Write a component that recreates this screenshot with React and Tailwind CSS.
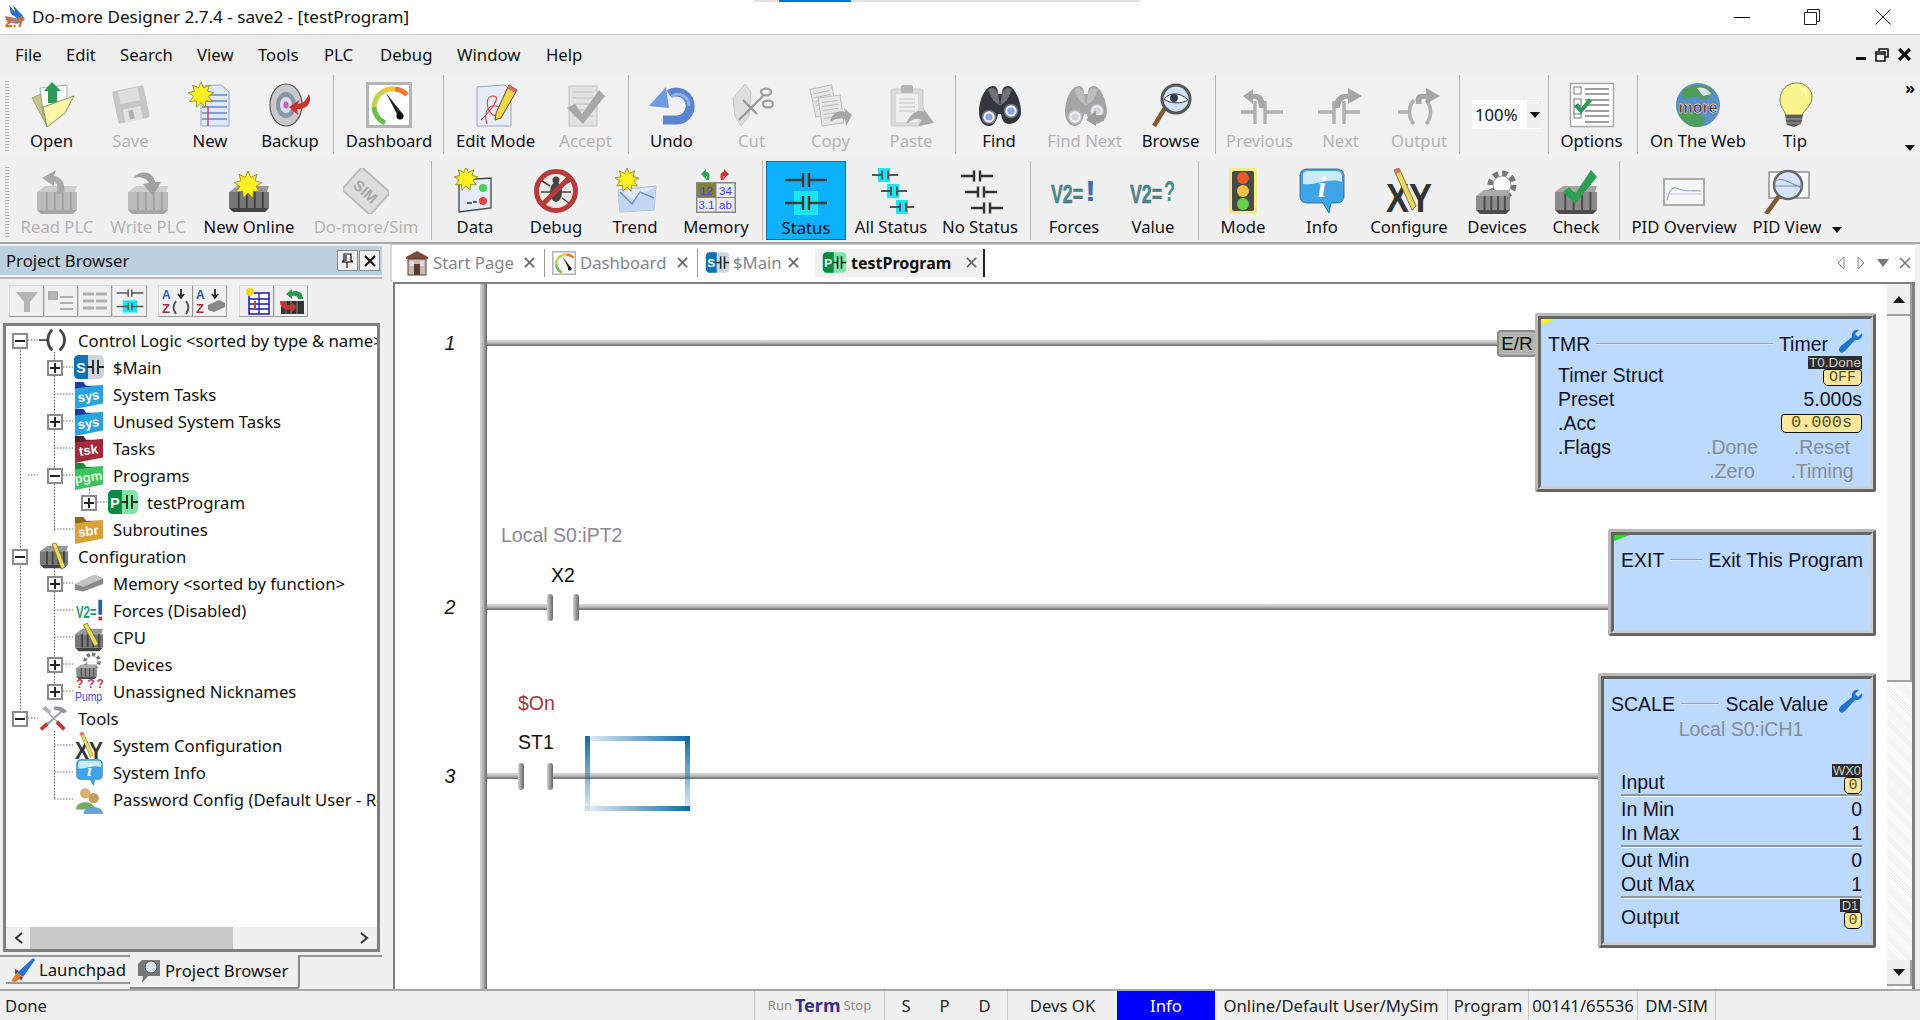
import React from 'react';

const pts = (cx, cy, R, r, n) =>
  Array.from({ length: n * 2 }, (_, i) => {
    const a = (Math.PI * i) / n - Math.PI / 2;
    const q = i % 2 ? r : R;
    return `${(cx + q * Math.cos(a)).toFixed(1)},${(cy + q * Math.sin(a)).toFixed(1)}`;
  }).join(' ');

const Star = ({ x, y, R = 11 }) => <polygon points={pts(x, y, R, R * 0.58, 9)} fill="#fff021" stroke="#8a7d1c" strokeWidth=".8" />;
const I = ({ children, s = 46, v = 46 }) => (
  <svg width={s} height={s} viewBox={`0 0 ${v} ${v}`} className="block shrink-0">{children}</svg>
);
const Ct = ({ x, y, w = 40, c = '#555', sw = 2.5, h = 12 }) => {
  const m = x + w / 2;
  return (
    <g stroke={c} strokeWidth={sw} fill="none">
      <path d={`M${x} ${y}H${m - 3}M${m + 3} ${y}H${x + w}M${m - 3} ${y - h / 2}V${y + h / 2}M${m + 3} ${y - h / 2}V${y + h / 2}`} />
    </g>
  );
};
const Plc = ({ x = 4, y = 20, w = 36, h = 24, a = '#9a9a9a', b = '#6e6e6e', t = '#c2c2c2' }) => (
  <g>
    <polygon points={`${x},${y} ${x + 8},${y - 6} ${x + w},${y - 6} ${x + w - 2},${y}`} fill={t} />
    <rect x={x} y={y} width={w} height={h - 4} fill={a} />
    <polygon points={`${x},${y + h - 4} ${x + w},${y + h - 4} ${x + w - 4},${y + h} ${x + 4},${y + h}`} fill={b} />
    {[0.22, 0.42, 0.62, 0.82].map((f) => <rect key={f} x={x + w * f} y={y} width="2" height={h - 4} fill={b} />)}
  </g>
);

const Open = () => <I>
  <polygon points="3,16 12,12 14,34 18,44" fill="#c9c48a" stroke="#8b8b60" strokeWidth=".7" />
  <polygon points="11,6 38,3 38,24 15,36" fill="#fff" stroke="#999" strokeWidth=".8" />
  <polygon points="23,0 32,9 28,9 28,21 19,21 19,9 15,9" fill="#2f9a55" />
  <polygon points="18,45 14,25 45,14 36,31" fill="#fdf7a9" stroke="#85835a" strokeWidth=".9" />
</I>;
const Save = () => <I><g transform="rotate(-12 23 23)">
  <rect x="7" y="6" width="32" height="33" rx="2" fill="#c6c6c6" />
  <rect x="13" y="7" width="20" height="13" fill="#dedede" />
  <rect x="14" y="26" width="18" height="13" fill="#e2e2e2" />
  <rect x="19" y="28" width="5" height="9" fill="#b0b0b0" />
</g></I>;
const New = () => <I>
  <polygon points="14,4 34,3 42,10 42,44 14,44" fill="#dfe9fa" stroke="#93a6c8" />
  {[13, 19, 25, 31, 37].map((y) => <path key={y} d={`M15 ${y}H40`} stroke="#3f6fb5" strokeWidth="1.2" />)}
  <path d="M21 24V44" stroke="#c04060" strokeWidth="1.4" />
  <Star x={14} y={13} R={13} />
</I>;
const Backup = () => <I>
  <ellipse cx="19" cy="23" rx="16" ry="21" fill="#c9c9c9" stroke="#555" strokeWidth="1.2" />
  <ellipse cx="19" cy="23" rx="10" ry="13" fill="#8596a6" />
  <ellipse cx="19" cy="23" rx="6" ry="8" fill="#dcdcdc" />
  <ellipse cx="19" cy="23" rx="2.5" ry="3.4" fill="#c65fc6" />
  <path d="M42 12C46 22 38 28 30 27L31 33L22 25L32 18L31 22C36 22 39 18 42 12Z" fill="#c5342f" />
</I>;
const Gauge = ({ s = 46 }) => <I s={s}>
  <rect x="1.5" y="1.5" width="43" height="43" fill="#fff" stroke="#b5b5b5" strokeWidth="3" />
  <g fill="none" strokeWidth="5">
    <path d="M19 41A19 19 0 0 1 8 25" stroke="#6cc04f" />
    <path d="M8 25A19 19 0 0 1 18 9" stroke="#c3d24a" />
    <path d="M18 9A19 19 0 0 1 29 7" stroke="#f3c33b" />
    <path d="M29 7A19 19 0 0 1 41 13" stroke="#ee7b33" />
  </g>
  <polygon points="20,11 36,31 32,34" fill="#222" />
  <circle cx="34" cy="34" r="3.6" fill="#111" />
</I>;
const Edit = () => <I>
  <polygon points="4,5 32,3 38,9 38,44 4,44" fill="#e6edf9" stroke="#9aa5b5" />
  <path d="M8 38C16 30 30 14 20 14C10 14 14 34 24 34C30 34 30 24 22 24C16 24 10 28 14 42" fill="none" stroke="#d24242" strokeWidth="1.1" />
  <polygon points="36,3 44,8 28,36 22,38 23,31" fill="#f2d64b" stroke="#5e5320" />
  <polygon points="36,3 44,8 42,11 34,6" fill="#d96a6a" />
</I>;
const Accept = () => <I>
  <rect x="6" y="4" width="28" height="40" fill="#e2e2e2" stroke="#c6c6c6" />
  {[10, 16, 22, 28, 34].map((y) => <path key={y} d={`M10 ${y}H30`} stroke="#c0c0c0" />)}
  <polygon points="4,26 12,22 19,32 36,8 42,14 20,42" fill="#a8a8a8" />
</I>;
const Undo = () => <I>
  <path d="M20 12A14 14 0 1 1 26 38H14" fill="none" stroke="#5b86cf" strokeWidth="9" />
  <path d="M22 15A11 11 0 0 1 40 24" fill="none" stroke="#8eb2ea" strokeWidth="3" />
  <polygon points="0,24 17,5 20,26" fill="#6e9bdf" />
</I>;
const Cut = () => <I>
  <polygon points="4,16 16,2 22,10 20,34 12,44 6,34" fill="#dedede" stroke="#c8c8c8" />
  <path d="M10 38L34 14M14 18L28 32" stroke="#9a9a9a" strokeWidth="2.4" />
  <ellipse cx="37" cy="10" rx="5" ry="3.4" fill="none" stroke="#a0a0a0" strokeWidth="2.4" />
  <ellipse cx="39" cy="22" rx="5" ry="3.4" fill="none" stroke="#a0a0a0" strokeWidth="2.4" />
</I>;
const Copy = () => <I>
  <g transform="rotate(-12 20 20)"><rect x="5" y="4" width="22" height="28" fill="#e6e6e6" stroke="#bdbdbd" />{[9, 13, 17, 21, 25].map((y) => <path key={y} d={`M8 ${y}H24`} stroke="#bbb" />)}</g>
  <g transform="rotate(-8 26 28)"><rect x="12" y="14" width="22" height="28" fill="#e6e6e6" stroke="#bdbdbd" />{[19, 23, 27, 31, 35].map((y) => <path key={y} d={`M15 ${y}H31`} stroke="#bbb" />)}</g>
  <path d="M22 40C24 30 32 28 37 30L36 26L44 33L38 44L37 37C32 35 27 37 22 40Z" fill="#a5a5a5" />
</I>;
const Paste = () => <I>
  <rect x="3" y="7" width="32" height="37" rx="2" fill="#dadada" stroke="#cbcbcb" />
  <rect x="8" y="12" width="22" height="28" fill="#efefef" />
  {[17, 21, 25, 29].map((y) => <path key={y} d={`M11 ${y}H27`} stroke="#c2c2c2" />)}
  <rect x="13" y="3" width="12" height="8" rx="2" fill="#b5b5b5" />
  <path d="M18 42C22 32 30 26 36 30L35 26L46 41L30 44L34 38C28 35 24 38 18 42Z" fill="#a9a9a9" />
</I>;
const Binoc = ({ gray }) => {
  const d = gray ? '#a5a5a5' : '#33363c';
  const m = gray ? '#bdbdbd' : '#6f7278';
  const l = gray ? '#d4d4d4' : '#88a6e4';
  return <I>
    <path d="M3 30C3 18 9 4 17 4C22 4 22 10 22 12H26C26 10 26 4 32 4C38 4 45 18 45 30C45 38 38 42 33 42C28 42 26 38 25 32H22C21 38 18 44 13 44C7 44 3 38 3 30Z" fill={d} />
    <path d="M12 8C16 4 20 6 22 12L24 24L17 18Z" fill={m} />
    <path d="M36 8C32 4 28 6 26 12L24 24L31 18Z" fill={m} />
    <circle cx="13" cy="35" r="6.5" fill="#e9eefc" stroke={m} strokeWidth="1.5" /><circle cx="13" cy="35" r="3.6" fill={l} />
    <circle cx="35" cy="29" r="6.5" fill="#e9eefc" stroke={m} strokeWidth="1.5" /><circle cx="35" cy="29" r="3.6" fill={l} />
    {gray && <polygon points="24,38 34,28 34,33 42,33 42,39 34,39 34,44" fill="#9d9d9d" />}
  </I>;
};
const Browse = () => <I>
  <path d="M6 44L17 26" stroke="#7f5a30" strokeWidth="4.5" />
  <circle cx="28" cy="17" r="14" fill="#cfdff8" stroke="#555" strokeWidth="3" />
  <path d="M16 17C22 10 32 10 40 18C34 22 22 22 16 17Z" fill="#fff" stroke="#333" strokeWidth="1" />
  <circle cx="26" cy="16" r="4" fill="#2c3e50" />
</I>;
const GArrowL = () => <I>
  <path d="M4 30H18M18 19V42M28 19V42M28 30H46" stroke="#b0b0b0" strokeWidth="3.4" fill="none" />
  <path d="M28 26C28 14 22 11 16 12L16 7L6 14L16 22L16 17C20 16 22 20 22 26Z" fill="#a6a6a6" />
</I>;
const GArrowR = () => <I>
  <path d="M0 30H16M16 19V42M26 19V42M26 30H42" stroke="#b0b0b0" strokeWidth="3.4" fill="none" />
  <path d="M16 26C16 14 24 11 30 12L30 6L44 14L30 22L30 17C26 16 22 20 22 26Z" fill="#a6a6a6" />
</I>;
const GOut = () => <I>
  <path d="M2 30H12" stroke="#b0b0b0" strokeWidth="3.4" />
  <path d="M18 18C12 24 12 36 18 42M30 18C36 24 36 36 30 42" fill="none" stroke="#b0b0b0" strokeWidth="3.6" />
  <path d="M20 22C18 12 24 11 30 12L30 6L44 14L30 22L30 17C26 16 24 18 26 22Z" fill="#a6a6a6" />
</I>;
const Options = () => <I>
  <rect x="1.5" y="1.5" width="43" height="43" fill="#fff" stroke="#aaa" strokeWidth="1.5" />
  {[8, 20, 32].map((y) => <rect key={y} x="5" y={y - 3} width="7" height="7" fill="#fff" stroke="#777" />)}
  <rect x="5" y="25" width="7" height="7" fill="#fff" stroke="#777" />
  {[7, 12, 18, 23, 29, 34, 40].map((y) => <path key={y} d={`M16 ${y}H40`} stroke="#888" strokeWidth="1.6" />)}
  <polygon points="5,24 9,21 12,26 20,16 23,19 12,32" fill="#2f9a55" />
</I>;
const Web = () => <I>
  <circle cx="23" cy="23" r="22" fill="#5a8fc9" />
  <path d="M8 8C16 2 30 0 38 8C38 14 30 20 24 16C18 12 12 18 6 16ZM4 32C12 28 24 30 30 36C30 42 24 46 20 45C12 44 6 38 4 32Z" fill="#4f9c58" />
  <path d="M22 6C28 4 34 8 36 12L28 14Z" fill="#d9e4ee" />
  <text x="23" y="31" textAnchor="middle" fontFamily="Liberation Sans" fontWeight="700" fontSize="16" fill="#5d2f1d" stroke="#fff" strokeWidth=".4">more</text>
</I>;
const Tip = () => <I>
  <path d="M25 1C14 1 8 9 8 18C8 25 12 28 14 33H30C32 28 40 24 40 15C40 7 33 1 25 1Z" fill="#f9f48c" stroke="#80804c" />
  <path d="M26 5C32 5 36 10 35 16C33 10 30 7 26 5Z" fill="#fffde0" />
  <path d="M13 33H31L29 42L22 45L15 43Z" fill="#5c5c5c" />
  <path d="M13 37H30M14 41H29" stroke="#9d9d9d" strokeWidth="1.2" />
</I>;
const ReadPlc = () => <I>
  <Plc x={3} y={24} w={40} h={22} a="#bbb" b="#a4a4a4" t="#cdcdcd" />
  <path d="M30 26C32 14 26 8 20 8L22 2L8 10L20 18L20 14C24 14 24 22 22 26Z" fill="#a9a9a9" />
</I>;
const WritePlc = () => <I>
  <Plc x={3} y={24} w={40} h={22} a="#bbb" b="#a4a4a4" t="#cdcdcd" />
  <path d="M8 10C14 2 28 2 30 14L36 14L28 28L18 16L24 15C22 10 14 8 8 10Z" fill="#a2a2a2" />
</I>;
const NewOnline = () => <I>
  <Plc x={3} y={24} w={40} h={20} a="#777" b="#444" t="#999" />
  <Star x={22} y={17} R={14} />
</I>;
const Sim = () => <I>
  <g transform="rotate(42 23 23)">
    <rect x="4" y="8" width="38" height="30" rx="2" fill="#ddd" stroke="#bbb" strokeWidth="2" />
    <text x="23" y="29" textAnchor="middle" fontFamily="Liberation Sans" fontWeight="700" fontSize="15" fill="#a8a8a8">SIM</text>
  </g>
</I>;
const Data = () => <I>
  <polygon points="7,12 39,10 39,40 7,44" fill="#e4ecf8" stroke="#444" strokeWidth="1.3" />
  <circle cx="31" cy="20" r="4" fill="#46d060" /><circle cx="31" cy="33" r="4" fill="#e04848" />
  <path d="M15 35H20M21 34H25" stroke="#333" strokeWidth="1.6" />
  <Star x={14} y={11} R={12} />
</I>;
const Debug = () => <I>
  <circle cx="23" cy="23" r="19.5" fill="#ede9e6" stroke="#b83b3b" strokeWidth="5" />
  <ellipse cx="23" cy="24" rx="6" ry="10" fill="#444" />
  <circle cx="23" cy="12" r="3.5" fill="#444" />
  <path d="M17 18L9 13M17 24H8M17 30L10 35M29 18L37 13M29 24H38M29 30L36 35" stroke="#444" strokeWidth="1.5" />
  <path d="M9 37L37 9" stroke="#b83b3b" strokeWidth="5" />
</I>;
const Trend = () => <I>
  <polygon points="6,22 44,18 42,42 8,44" fill="#dde8fa" stroke="#a8b6cc" />
  <polygon points="6,22 22,32 44,18 42,42 8,44" fill="#c2d5f3" />
  <path d="M8 24L20 36L28 24L42 30" fill="none" stroke="#6f8fb8" strokeWidth="1.4" />
  <Star x={15} y={12} R={12} />
</I>;
const Memory = () => <I>
  <path d="M8 6L13 1V4C17 4 17 8 16 12L13 12C14 9 14 8 13 8V11Z" fill="#2ea24f" />
  <path d="M36 6L31 1V4C27 4 27 8 28 12L31 12C30 9 30 8 31 8V11Z" fill="#d0342f" />
  <rect x="3" y="14" width="40" height="31" fill="#888" />
  <rect x="4.5" y="15.5" width="18" height="13.5" fill="#7f7f3a" /><rect x="23.5" y="15.5" width="18" height="13.5" fill="#ececec" />
  <rect x="4.5" y="30" width="18" height="13.5" fill="#ececec" /><rect x="23.5" y="30" width="18" height="13.5" fill="#ececec" />
  <g fontFamily="Liberation Sans" fontSize="11.5" fill="#3d3dff" textAnchor="middle">
    <text x="13.5" y="26.5">12</text><text x="32.5" y="26.5">34</text><text x="13.5" y="41">3.1</text><text x="32.5" y="41">ab</text>
  </g>
</I>;
const Status = () => <I>
  <Ct x={2} y={11} w={42} c="#3d3d3d" h={14} />
  <rect x="11" y="22" width="24" height="24" fill="#19e6f0" />
  <Ct x={2} y={34} w={42} c="#3d3d3d" h={14} />
</I>;
const AllStatus = () => <I>
  {[[4, 3], [13, 19], [22, 35]].map(([x, y]) => <g key={y}>
    <rect x={x + 6} y={y - 3} width="12" height="14" fill="#1fe5ee" />
    <Ct x={x} y={y + 4} w={26} c="#555" sw={2} h={9} />
  </g>)}
</I>;
const NoStatus = () => <I>
  <Ct x={4} y={8} w={32} c="#333" h={11} />
  <Ct x={8} y={24} w={32} c="#333" h={11} />
  <Ct x={14} y={40} w={32} c="#333" h={11} />
</I>;
const Vtext = ({ q }) => <I>
  <text x="0" y="35" fontFamily="Liberation Sans" fontWeight="700" fontSize="25" textLength="32" lengthAdjust="spacingAndGlyphs" fill="#3f8f8a" stroke="#557" strokeWidth=".4">V2=</text>
  <text x="34" y="33" fontFamily="Liberation Sans" fontWeight="700" fontSize="30" textLength="11" lengthAdjust="spacingAndGlyphs" fill={q ? '#3f8f8a' : '#3d6fb0'}>{q ? '?' : '!'}</text>
</I>;
const Mode = () => <I>
  <rect x="9" y="0" width="28" height="46" rx="2" fill="#f2ed88" />
  <rect x="12" y="3" width="22" height="40" rx="2" fill="#4a4a44" />
  <circle cx="23" cy="10" r="6" fill="#e85a2a" /><circle cx="23" cy="23" r="6" fill="#edc341" /><circle cx="23" cy="36" r="6" fill="#63cf4c" />
</I>;
const Info = ({ s = 46 }) => <I s={s}>
  <path d="M8 1H38C42 1 45 4 45 8V28C45 32 42 35 38 35H32L30 45L24 35H8C4 35 1 32 1 28V8C1 4 4 1 8 1Z" fill="#3ea5e8" stroke="#1a5a90" strokeWidth=".8" />
  <path d="M4 8C4 4 6 3 9 3H37C41 3 43 5 43 9V14C30 9 16 18 4 16Z" fill="#cdeafb" />
  <text x="23" y="29" textAnchor="middle" fontFamily="Liberation Serif" fontStyle="italic" fontWeight="700" fontSize="30" fill="#fff">i</text>
</I>;
const Xy = ({ s = 46 }) => <I s={s}>
  <text x="0" y="44" fontFamily="Liberation Sans" fontWeight="700" fontSize="40" fill="#333" textLength="46" lengthAdjust="spacingAndGlyphs">XY</text>
  <polygon points="8,2 13,0 30,38 26,42" fill="#edd860" stroke="#6a5f20" strokeWidth=".8" />
  <polygon points="8,2 13,0 15,4 10,6" fill="#d97272" />
</I>;
const Devices = ({ s = 46 }) => <I s={s}>
  <circle cx="28" cy="17" r="11" fill="#fff" stroke="#777" strokeWidth="7" strokeDasharray="5 3.6" />
  <circle cx="28" cy="17" r="9" fill="#fff" stroke="#999" />
  <Plc x={2} y={28} w={34} h={18} a="#8c8c8c" b="#4c4c4c" t="#aaa" />
</I>;
const Check = () => <I>
  <Plc x={2} y={24} w={42} h={22} a="#8a8a8a" b="#4c4c4c" t="#a5a5a5" />
  <polygon points="10,24 16,19 22,26 38,2 44,9 22,36" fill="#2d9e52" />
</I>;
const PidO = () => <I>
  <rect x="3" y="11" width="40" height="26" fill="#f7f7f7" stroke="#999" strokeWidth="1.6" />
  <path d="M6 32C9 20 13 18 18 21C24 24 32 22 40 23" fill="none" stroke="#8faac8" strokeWidth="1.2" />
  <path d="M5 26H41" stroke="#b4c8de" />
</I>;
const PidV = () => <I>
  <rect x="5" y="4" width="40" height="26" fill="#f7f7f7" stroke="#999" strokeWidth="1.6" />
  <path d="M2 46L15 28" stroke="#7f5a30" strokeWidth="4.5" />
  <circle cx="24" cy="17" r="14" fill="#d6e4f9" stroke="#666" strokeWidth="2.4" />
  <path d="M10 14C16 8 24 14 38 20M10 18H38" fill="none" stroke="#6e8bb4" strokeWidth="1.1" />
</I>;

const row1 = [
  ['Open', Open, 'w-[79px]', 0], ['Save', Save, 'w-[79px]', 1], ['New', New, 'w-[80px]', 0], ['Backup', Backup, 'w-[80px]', 0], 's-[6px]',
  ['Dashboard', Gauge, 'w-[106px]', 0], 's-[3px]', ['Edit Mode', Edit, 'w-[101px]', 0], ['Accept', Accept, 'w-[79px]', 1], 's-[6px]',
  ['Undo', Undo, 'w-[81px]', 0], ['Cut', Cut, 'w-[79px]', 1], ['Copy', Copy, 'w-[79px]', 1], ['Paste', Paste, 'w-[82px]', 1], 's-[6px]',
  ['Find', () => <Binoc />, 'w-[82px]', 0], ['Find Next', () => <Binoc gray />, 'w-[89px]', 1], ['Browse', Browse, 'w-[83px]', 0], 's-[6px]',
  ['Previous', GArrowL, 'w-[83px]', 1], ['Next', GArrowR, 'w-[79px]', 1], ['Output', GOut, 'w-[78px]', 1],
];
const row2 = [
  ['Read PLC', ReadPlc, 'w-[90px]', 1], ['Write PLC', WritePlc, 'w-[92px]', 1], ['New Online', NewOnline, 'w-[110px]', 0], ['Do-more/Sim', Sim, 'w-[124px]', 1], 's-[6px]',
  ['Data', Data, 'w-[82px]', 0], ['Debug', Debug, 'w-[80px]', 0], ['Trend', Trend, 'w-[78px]', 0], ['Memory', Memory, 'w-[84px]', 0], 's-[8px]',
  ['Status', Status, 'w-[80px]', 2], ['All Status', AllStatus, 'w-[90px]', 0], ['No Status', NoStatus, 'w-[88px]', 0], 's-[12px]',
  ['Forces', () => <Vtext />, 'w-[76px]', 0], ['Value', () => <Vtext q />, 'w-[82px]', 0], 's-[8px]',
  ['Mode', Mode, 'w-[82px]', 0], ['Info', Info, 'w-[76px]', 0], ['Configure', Xy, 'w-[98px]', 0], ['Devices', Devices, 'w-[78px]', 0], ['Check', Check, 'w-[80px]', 0], 's-[6px]',
  ['PID Overview', PidO, 'w-[124px]', 0], ['PID View', PidV, 'w-[82px]', 0],
];

const Sep = ({ w }) => {
  const cls = { 's-[3px]': 'w-[3px]', 's-[6px]': 'w-[6px]', 's-[8px]': 'w-[8px]', 's-[12px]': 'w-[12px]' }[w];
  return <div className={`${cls} flex justify-center shrink-0 h-[79px]`}><div className="w-[1px] h-full bg-[#b4b4b4]" /></div>;
};
const ToolBtn = ({ item }) => {
  const [label, Ic, w, mode] = item;
  return (
    <div className={`${w} shrink-0 h-[79px] flex flex-col items-center pt-[7px] ${mode === 2 ? 'bg-[#0cb2ff] border border-[#0a6ea8] pt-[6px]' : ''}`}>
      <Ic />
      <span className={`mt-[4px] leading-[18px] text-[16.7px] whitespace-nowrap ${mode === 1 ? 'text-[#b4b4b4]' : 'text-[#101018]'}`}>{label}</span>
    </div>
  );
};
const Gripper = () => <div className="w-[4px] h-[70px] mt-[6px] ml-[5px] mr-[3px] shrink-0 bg-[repeating-linear-gradient(0deg,#b5b5b5_0_1px,transparent_1px_3px)]" />;
const Tri = ({ className = '' }) => <svg width="10" height="6" viewBox="0 0 10 6" className={className}><polygon points="0,0 10,0 5,6" fill="#111" /></svg>;
const X = ({ s = 12, c = '#555', w = 1.6 }) => <svg width={s} height={s} viewBox="0 0 12 12"><path d="M1 1L11 11M11 1L1 11" stroke={c} strokeWidth={w} /></svg>;

const Folder = ({ a, b, t, tc = '#fff' }) => <I s={30} v={32}>
  <path d="M1 2H10L13 6H29V12H1Z" fill={a} />
  <polygon points="1,9 31,5 31,25 1,31" fill={b} />
  <text x="16" y="22" textAnchor="middle" fontFamily="Liberation Sans" fontWeight="700" fontSize="14" fill={tc} transform="rotate(-8 16 22)">{t}</text>
</I>;
const Prog = ({ l, a, b }) => <I s={32} v={32}>
  <rect x="1" y="3" width="30" height="24" rx="5" fill={b} />
  <path d="M1 8C1 5 3 3 6 3H15V27H6C3 27 1 25 1 22Z" fill={a} />
  <text x="8" y="21" textAnchor="middle" fontFamily="Liberation Sans" fontWeight="700" fontSize="14" fill="#fff">{l}</text>
  <path d="M14 15H20M25 15H31M20 8V22M25 8V22" stroke="#222" strokeWidth="1.8" fill="none" />
</I>;
const Ctrl = () => <I s={30} v={32}>
  <path d="M0 15H9" stroke="#555" strokeWidth="2" />
  <path d="M14 4C8 10 8 20 14 26M22 4C29 10 29 20 22 26" fill="none" stroke="#444" strokeWidth="3" />
</I>;
const Cfg = () => <I s={30} v={32}>
  <Plc x={1} y={10} w={30} h={18} a="#777" b="#444" t="#999" />
  <polygon points="14,2 18,1 28,26 24,29" fill="#edd860" stroke="#6a5f20" strokeWidth=".7" />
</I>;
const Mem = () => <I s={30} v={32}>
  <polygon points="1,16 22,6 31,10 31,16 10,24 1,22" fill="#8a8a8a" />
  <polygon points="1,16 22,6 31,10 10,19" fill="#c5c5c5" />
</I>;
const ForcesT = () => <I s={30} v={32}>
  <text x="2" y="23" fontFamily="Liberation Sans" fontWeight="700" fontSize="17" textLength="22" lengthAdjust="spacingAndGlyphs" fill="#1f9a6e">V2=</text>
  <rect x="26" y="4" width="4" height="16" fill="#2a5ea8" /><rect x="26" y="22" width="4" height="4" fill="#d0342f" />
</I>;
const Cpu = () => <I s={30} v={32}>
  <Plc x={1} y={12} w={30} h={18} a="#777" b="#444" t="#9a9a9a" />
  <polygon points="10,2 14,0 26,22 22,25" fill="#edd860" stroke="#6a5f20" strokeWidth=".7" />
</I>;
const Pump = () => <I s={30} v={32}>
  <text x="2" y="12" fontFamily="Liberation Sans" fontWeight="700" fontSize="13" fill="#d0342f">?</text>
  <text x="14" y="12" fontFamily="Liberation Sans" fontWeight="700" fontSize="13" fill="#b03a8a">?</text>
  <text x="24" y="12" fontFamily="Liberation Sans" fontWeight="700" fontSize="13" fill="#c04050">?</text>
  <text x="1" y="26" fontFamily="Liberation Sans" fontSize="13" fill="#3a4fd0" textLength="29" lengthAdjust="spacingAndGlyphs">Pump</text>
</I>;
const ToolsI = () => <I s={30} v={32}>
  <path d="M5 25L24 8" stroke="#9aa4ae" strokeWidth="2.4" />
  <path d="M16 3C20 2 26 3 30 8L26 10C24 8 20 6 16 6Z" fill="#8a94a0" />
  <path d="M3 5L7 2L13 8L11 11Z" fill="#aab0b8" />
  <path d="M11 11L27 26" stroke="#aab0b8" strokeWidth="1.6" />
  <path d="M19 19L27 27" stroke="#d0342f" strokeWidth="4" />
  <path d="M2 27L9 21" stroke="#d0342f" strokeWidth="4" />
</I>;
const Users = () => <I s={30} v={32}>
  <circle cx="12" cy="9" r="5.5" fill="#d8b070" /><path d="M2 26C2 16 22 16 22 26Z" fill="#6fae5f" />
  <circle cx="21" cy="14" r="5.5" fill="#c89a60" /><path d="M10 31C10 21 31 21 31 31Z" fill="#6f9fd0" />
</I>;

const tree = [
  [0, '-', <Ctrl />, 'Control Logic <sorted by type & name>'],
  [1, '+', <Prog l="S" a="#0f72b8" b="#cdd6de" />, '$Main'],
  [1, '', <Folder a="#1a3c9a" b="#29a3e0" t="sys" />, 'System Tasks'],
  [1, '+', <Folder a="#1a3c9a" b="#29a3e0" t="sys" />, 'Unused System Tasks'],
  [1, '', <Folder a="#5a1a2a" b="#a32a3a" t="tsk" />, 'Tasks'],
  [1, '-', <Folder a="#1e8a3a" b="#3fc35f" t="pgm" tc="#d8ffd8" />, 'Programs'],
  [2, '+', <Prog l="P" a="#0c8a45" b="#7fe6a5" />, 'testProgram'],
  [1, '', <Folder a="#8a6a1a" b="#d8a238" t="sbr" />, 'Subroutines'],
  [0, '-', <Cfg />, 'Configuration'],
  [1, '+', <Mem />, 'Memory <sorted by function>'],
  [1, '', <ForcesT />, 'Forces (Disabled)'],
  [1, '', <Cpu />, 'CPU'],
  [1, '+', <Devices s={28} />, 'Devices'],
  [1, '+', <Pump />, 'Unassigned Nicknames'],
  [0, '-', <ToolsI />, 'Tools'],
  [1, '', <Xy s={28} />, 'System Configuration'],
  [1, '', <Info s={27} />, 'System Info'],
  [1, '', <Users />, 'Password Config (Default User - Read/Write)'],
];
const indent = ['pl-[6px]', 'pl-[41px]', 'pl-[75px]'];
const Exp = ({ k }) => k ? (
  <div className="w-[16px] h-[16px] border-2 border-[#8a8a8a] bg-white flex items-center justify-center shrink-0 relative">
    <div className="w-[10px] h-[2px] bg-[#222]" />
    {k === '+' && <div className="absolute w-[2px] h-[10px] bg-[#222]" />}
  </div>
) : <div className="w-[16px] shrink-0" />;

const tbBtns = [
  [<svg width="24" height="24" viewBox="0 0 24 24"><polygon points="1,3 23,3 15,13 15,23 9,23 9,13" fill="#b5b5b5" /></svg>, 'w-[35px]'],
  [<svg width="26" height="24" viewBox="0 0 26 24"><path d="M1 3H9V10H1ZM12 8H25M12 14H25M12 20H25" stroke="#b0b0b0" strokeWidth="2" fill="#b5b5b5" /></svg>, 'w-[34px]'],
  [<svg width="26" height="24" viewBox="0 0 26 24"><path d="M1 5H12M14 5H25M1 12H12M14 12H25M1 19H12M14 19H25" stroke="#b0b0b0" strokeWidth="3" /></svg>, 'w-[34px]'],
  [<svg width="28" height="28" viewBox="0 0 46 46"><rect x="11" y="22" width="24" height="20" fill="#19e6f0" /><Ct x={1} y={10} w={44} c="#555" /><Ct x={1} y={32} w={44} c="#555" /></svg>, 'w-[35px] mr-[11px]'],
  [<svg width="30" height="28" viewBox="0 0 30 28"><text x="1" y="12" fontFamily="Liberation Sans" fontWeight="700" fontSize="12" fill="#2a5ea8">A</text><text x="1" y="26" fontFamily="Liberation Sans" fontWeight="700" fontSize="13" fill="#a03040">Z</text><path d="M20 2V9M17 7L20 11L23 7" stroke="#111" strokeWidth="1.6" fill="none" /><path d="M15 14C12 18 12 23 15 27M25 14C28 18 28 23 25 27" stroke="#555" strokeWidth="2" fill="none" /></svg>, 'w-[35px]'],
  [<svg width="30" height="28" viewBox="0 0 30 28"><text x="1" y="12" fontFamily="Liberation Sans" fontWeight="700" fontSize="12" fill="#2a5ea8">A</text><text x="1" y="26" fontFamily="Liberation Sans" fontWeight="700" fontSize="13" fill="#a03040">Z</text><path d="M20 2V9M17 7L20 11L23 7" stroke="#111" strokeWidth="1.6" fill="none" /><polygon points="13,18 24,13 30,16 30,20 19,25 13,23" fill="#888" /></svg>, 'w-[34px] mr-[12px]'],
  [<svg width="26" height="28" viewBox="0 0 26 28"><rect x="5" y="6" width="20" height="21" fill="#fff" stroke="#1a1aaa" strokeWidth="1.5" /><path d="M5 12H25M5 17H25M5 22H25M15 6V27" stroke="#1a1aaa" strokeWidth="1.3" /><path d="M11 14V22" stroke="#d0342f" strokeWidth="2" /><circle cx="6" cy="5" r="4" fill="#f1d71e" /></svg>, 'w-[35px]'],
  [<svg width="28" height="28" viewBox="0 0 28 28"><rect x="4" y="14" width="23" height="13" fill="#333" /><path d="M9 14V27M14 14V27M20 14V27" stroke="#888" /><path d="M26 12C26 4 18 3 15 5L15 2L9 7L15 12L15 9C18 8 21 9 21 12Z" fill="#2e9a4f" /><path d="M3 14C3 22 10 24 14 22L14 26L20 20L14 15L14 18C10 19 8 17 8 14Z" fill="#d0342f" /></svg>, 'w-[34px]'],
];

const pipeH = 'h-[6px] bg-gradient-to-b from-[#dcdcd8] via-[#b9b9b6] to-[#666]';
const Wire = ({ className = '' }) => <div className={`${pipeH} ${className}`} />;
const Rail = () => <div className="w-[7px] shrink-0 self-stretch bg-gradient-to-r from-[#d8d8d4] via-[#b0b0ae] to-[#666]" />;
const Bar = () => <div className="w-[6px] h-[27px] rounded-[3px] bg-gradient-to-r from-[#d4d4d0] to-[#666]" />;
const NoLine = ({ className = '' }) => <div className={`h-[2px] bg-[#98a4b0] border-b border-[#d6e6fb] ${className}`} />;
const Wrench = () => <svg width="25" height="25" viewBox="0 0 25 25" className="ml-[10px] shrink-0 -mt-[6px]"><path d="M2 23C0 21 1 19 3 17L14 8C13 4 16 0 21 1L17 5L20 8L24 4C25 9 21 12 17 11L7 22C5 24 3 24 2 23Z" fill="#1f74c8" /></svg>;
const Box = ({ w, h, children }) => (
  <div className={`${w} ${h} shrink-0 rounded-[3px] border-[3px] border-t-[#b9b9b5] border-l-[#b9b9b5] border-r-[#666] border-b-[#666]`}>
    <div className="relative h-full border-[3px] border-t-[#666] border-l-[#666] border-r-[#cfcfcb] border-b-[#cfcfcb] bg-[#bcd9fe] flex flex-col text-[19.5px] leading-[24px] text-[#111128] overflow-hidden">
      {children}
    </div>
  </div>
);
const Pill = ({ className = '', children }) => <div className={`bg-[#fde79b] border-[1.5px] border-[#111] rounded-b-[5px] rounded-t-[3px] font-['Liberation_Mono',monospace] text-[#55502f] flex items-center justify-center ${className}`}>{children}</div>;
const Lbl = ({ className = '', children }) => <div className={`bg-[#2d2d2d] text-[#cfcfcf] leading-[13px] text-center whitespace-nowrap ${className}`}>{children}</div>;
const Row = ({ l, r }) => <div className="flex justify-between pl-[17px] pr-[8px] h-[24px] items-center"><span>{l}</span><span>{r}</span></div>;
const Sp = () => <div className="mx-[17px] mr-[8px] h-[3px] bg-[#8f979f] border-b border-[#eef5ff]" />;
const Num = ({ n, className }) => <div className={`w-[85px] shrink-0 pl-[25px] text-center italic text-[#111] text-[19.5px] leading-[20px] ${className}`}>{n}</div>;
const FadeBox = () => (
  <div className="absolute left-[98px] top-[76px] w-[105px] h-[75px] pointer-events-none">
    <div className="absolute inset-x-0 top-0 h-[5px] bg-gradient-to-r from-[#0f6aa8]/10 to-[#0f6aa8]" />
    <div className="absolute inset-x-0 bottom-0 h-[5px] bg-gradient-to-r from-[#0f6aa8]/10 to-[#0f6aa8]" />
    <div className="absolute inset-y-0 left-0 w-[5px] bg-gradient-to-b from-[#0f6aa8] to-[#0f6aa8]/10" />
    <div className="absolute inset-y-0 right-0 w-[5px] bg-gradient-to-b from-[#0f6aa8] to-[#0f6aa8]/10" />
  </div>
);

const tabs = [
  ['Start Page', <svg width="24" height="26" viewBox="0 0 24 26"><polygon points="12,1 23,7 23,9 1,9 1,7" fill="#7a4a3a" /><rect x="3" y="9" width="18" height="16" fill="#c7bdb4" stroke="#5a4030" /><rect x="9" y="14" width="6" height="11" fill="#5a3a2a" /><rect x="5" y="11" width="4" height="5" fill="#dde" /><rect x="15" y="11" width="4" height="5" fill="#dde" /></svg>, 'w-[140px] border-r border-[#999]'],
  ['Dashboard', <Gauge s={24} />, 'w-[146px] border-r border-[#999]'],
  ['$Main', <svg width="25" height="25" viewBox="0 0 32 32"><rect x="1" y="3" width="30" height="26" rx="5" fill="#cdd6de" /><path d="M1 8C1 5 3 3 6 3H15V29H6C3 29 1 27 1 24Z" fill="#0f72b8" /><text x="8" y="22" textAnchor="middle" fontFamily="Liberation Sans" fontWeight="700" fontSize="15" fill="#fff">S</text><path d="M14 16H20M25 16H31M20 8V24M25 8V24" stroke="#222" strokeWidth="2" fill="none" /></svg>, 'w-[103px]'],
];

export default function App() {
  return (
    <div className="w-[1920px] h-[1020px] flex flex-col overflow-hidden bg-[#f0f0f0] font-['Noto_Sans',sans-serif] text-[#111]">
      {/* title bar */}
      <div className="relative h-[35px] shrink-0 bg-white border-b border-[#c8c8c8] flex items-center">
        <div className="absolute left-[754px] top-0 w-[386px] h-[2px] bg-[#e2e2e2]"><div className="ml-[25px] w-[72px] h-full bg-[#0078d7]" /></div>
        <svg width="24" height="26" viewBox="0 0 24 26" className="ml-[3px] shrink-0">
          <path d="M6 1L12 8L10 1L20 12L14 14L8 10Z" fill="#2a6fd0" />
          <path d="M2 12L12 14L20 12L22 16L14 20L4 18Z" fill="#3a3a3a" opacity=".6" />
          <text x="2" y="23" fontFamily="Liberation Sans" fontWeight="700" fontSize="14" fill="#e8601c">2.7</text>
        </svg>
        <span className="ml-[5px] text-[17.1px] whitespace-nowrap">Do-more Designer 2.7.4 - save2 - [testProgram]</span>
        <div className="ml-auto flex items-center">
          <div className="w-[69px] flex justify-center"><div className="w-[16px] h-[1px] bg-black" /></div>
          <div className="w-[71px] flex justify-center"><svg width="16" height="16" viewBox="0 0 16 16"><path d="M3.5 3.5V0.5H15.5V12.5H12.5M0.5 3.5H12.5V15.5H0.5Z" fill="none" stroke="#222" /></svg></div>
          <div className="w-[71px] flex justify-center pr-[0px] mr-[2px]"><svg width="16" height="16" viewBox="0 0 16 16"><path d="M0.5 0.5L15.5 15.5M15.5 0.5L0.5 15.5" stroke="#222" /></svg></div>
        </div>
      </div>
      {/* menu */}
      <div className="h-[39px] shrink-0 flex items-center pl-[15px] text-[16.7px] bg-[#eeeeee]">
        {[['File', 'w-[51px]'], ['Edit', 'w-[54px]'], ['Search', 'w-[77px]'], ['View', 'w-[61px]'], ['Tools', 'w-[66px]'], ['PLC', 'w-[56px]'], ['Debug', 'w-[77px]'], ['Window', 'w-[89px]'], ['Help', 'w-[50px]']].map(([t, w]) => (
          <span key={t} className={w}>{t}</span>
        ))}
        <div className="ml-auto flex items-center gap-[9px] pr-[9px]">
          <div className="w-[10px] h-[3px] bg-[#111] mt-[8px]" />
          <svg width="14" height="14" viewBox="0 0 14 14"><path d="M4 3V1H13V9H10M1 4H10V13H1ZM1 6H10" fill="none" stroke="#111" strokeWidth="1.6" /></svg>
          <X s={13} c="#111" w={3} />
        </div>
      </div>
      {/* toolbar 1 */}
      <div className="h-[84px] shrink-0 flex pt-[1px] bg-[#f1f1f1] relative">
        <Gripper />
        {row1.map((it, i) => typeof it === 'string' ? <Sep key={i} w={it} /> : <ToolBtn key={i} item={it} />)}
        <Sep w="s-[3px]" />
        <div className="w-[86px] shrink-0 pt-[25px] pl-[11px]">
          <div className="w-[71px] h-[29px] bg-white flex items-center pl-[3px] text-[16.7px]">
            <span className="flex-1">100%</span>
            <div className="w-[17px] h-full bg-[#f0f0f0] flex items-center justify-center border border-white"><Tri /></div>
          </div>
        </div>
        <Sep w="s-[3px]" />
        <ToolBtn item={['Options', Options, 'w-[83px]', 0]} />
        <Sep w="s-[8px]" />
        <ToolBtn item={['On The Web', Web, 'w-[114px]', 0]} />
        <ToolBtn item={['Tip', Tip, 'w-[80px]', 0]} />
        <div className="flex-1 flex flex-col items-end pr-[5px] pt-[6px] gap-[50px]">
          <span className="text-[16px] font-bold leading-[14px]">»</span>
          <Tri />
        </div>
      </div>
      {/* toolbar 2 */}
      <div className="h-[86px] shrink-0 flex pt-[3px] bg-[#f0f0f0] border-b-[2px] border-[#a8a8a8]">
        <Gripper />
        {row2.map((it, i) => typeof it === 'string' ? <Sep key={i} w={it} /> : <ToolBtn key={i} item={it} />)}
        <div className="self-end mb-[9px] ml-[4px]"><Tri /></div>
      </div>
      {/* body */}
      <div className="flex-1 min-h-0 flex">
        {/* left panel */}
        <div className="w-[390px] shrink-0 flex flex-col pt-[2px]">
          <div className="w-[382px] h-[29px] shrink-0 bg-[#bdd0e0] flex items-center pl-[6px] text-[16.7px]">
            <span className="flex-1">Project Browser</span>
            <div className="w-[21px] h-[21px] bg-[#f0f0f0] border border-[#888] flex items-center justify-center"><svg width="11" height="15" viewBox="0 0 11 15"><path d="M2 1H9V8H11V9H0V8H2ZM4 2V8M5 9V15" stroke="#111" strokeWidth="1.2" fill="none" /></svg></div>
            <div className="w-[21px] h-[21px] ml-[1px] mr-[2px] bg-[#f0f0f0] border border-[#888] flex items-center justify-center"><X s={12} c="#111" w={2} /></div>
          </div>
          <div className="w-[382px] h-[2px] mt-[2px] bg-[#b8b8b8] shrink-0" />
          <div className="h-[32px] mt-[6px] shrink-0 flex pl-[9px]">
            {tbBtns.map(([ic, w], i) => (
              <div key={i} className={`${w} h-[32px] bg-[#f0f0f0] border border-[#d8d8d8] border-r-[#999] border-b-[#999] flex items-center justify-center overflow-hidden shrink-0`}>{ic}</div>
            ))}
          </div>
          <div className="relative mt-[6px] ml-[3px] w-[377px] h-[629px] shrink-0 border-[3px] border-[#808080] bg-white flex flex-col">
            <svg width="120" height="480" viewBox="6 327 120 480" className="absolute left-0 top-0 pointer-events-none">
              <g stroke="#666" strokeWidth="1" strokeDasharray="1.5 1.5" fill="none">
                <path d="M20.5 349V711M54.5 353V533M54.5 569V692M54.5 732V800M89.5 487V503" />
                <path d="M28 341H38M28 476H38M28 719H38M63 368H73M54 395H73M63 422H73M54 449H73M63 476H73M54 530H73M97 503H107M63 584H73M54 611H73M54 638H73M63 665H73M63 692H73M54 746H73M54 773H73M54 800H73" />
              </g>
            </svg>
            <div className="flex-1 min-h-0 overflow-hidden pt-[1px]">
              {tree.map(([lv, k, ic, t], i) => (
                <div key={i} className={`h-[27px] flex items-center whitespace-nowrap text-[16.7px] relative ${indent[lv]}`}>
                  <Exp k={k} />
                  <div className="ml-[10px] mr-[8px] shrink-0 w-[32px] h-[27px] flex items-center justify-center">{ic}</div>
                  <span>{t}</span>
                </div>
              ))}
            </div>
            <div className="h-[22px] shrink-0 bg-[#f0f0f0] flex items-center relative">
              <svg width="10" height="12" viewBox="0 0 10 12" className="ml-[8px]"><path d="M8 1L2 6L8 11" fill="none" stroke="#333" strokeWidth="2" /></svg>
              <div className="ml-[6px] w-[203px] h-full bg-[#c9c9c9]" />
              <svg width="10" height="12" viewBox="0 0 10 12" className="ml-auto mr-[8px]"><path d="M2 1L8 6L2 11" fill="none" stroke="#333" strokeWidth="2" /></svg>
            </div>
          </div>
          <div className="mt-[3px] ml-0 w-[382px] border-t-[2px] border-[#999] flex items-start shrink-0">
            <div className="ml-[6px] w-[124px] h-[27px] border-b-[2px] border-[#999] flex items-center gap-[2px] pl-[3px] text-[16.7px] whitespace-nowrap">
              <svg width="28" height="26" viewBox="0 0 28 26" className="shrink-0"><path d="M8 16L24 1L26 3L14 20Z" fill="#2a70d0" /><path d="M8 16L14 20L6 25L2 24Z" fill="#e07a2a" /><path d="M6 12L10 14L6 18ZM14 20L12 24L10 20Z" fill="#555" /></svg>
              <span>Launchpad</span>
            </div>
            <div className="w-[170px] h-[34px] -mt-[2px] bg-[#f0f0f0] border-r-[2px] border-b-[2px] border-[#888] rounded-br-[3px] flex items-center gap-[3px] pl-[6px] text-[16.7px] whitespace-nowrap">
              <svg width="26" height="26" viewBox="0 0 26 26" className="shrink-0"><path d="M6 2H24V18H12L6 25L7 18H2V6Z" fill="#777" /><circle cx="15" cy="9" r="6" fill="#dde4ea" stroke="#555" /></svg>
              <span>Project Browser</span>
            </div>
          </div>
        </div>
        {/* main */}
        <div className="flex-1 min-w-0 flex flex-col pr-[5px] mt-0">
          <div className="h-[38px] shrink-0 flex items-center bg-white pl-[13px] pb-[2px] border-t border-[#d0d0d0] border-l-2 border-l-[#d8d8d8] text-[16.7px] text-[#84848f]">
            {tabs.map(([t, ic, w]) => (
              <div key={t} className={`${w} shrink-0 h-[28px] flex items-center mr-[7px]`}>
                <div className="w-[28px] shrink-0 flex items-center">{ic}</div>
                <span className="whitespace-nowrap">{t}</span>
                <div className="ml-auto pr-[9px]"><X s={11} c="#666" w={1.8} /></div>
              </div>
            ))}
            <div className="w-[170px] shrink-0 h-[28px] bg-[#f0f0f0] border-r-2 border-[#222] flex items-center pl-[7px]">
              <div className="w-[29px] shrink-0"><svg width="25" height="25" viewBox="0 0 32 32" className="block"><rect x="1" y="3" width="30" height="26" rx="5" fill="#7fe6a5" /><path d="M1 8C1 5 3 3 6 3H15V29H6C3 29 1 27 1 24Z" fill="#0c8a45" /><text x="8" y="22" textAnchor="middle" fontFamily="Liberation Sans" fontWeight="700" fontSize="15" fill="#fff">P</text><path d="M14 16H20M25 16H31M20 8V24M25 8V24" stroke="#222" strokeWidth="2" fill="none" /></svg></div>
              <span className="font-bold text-[#111] text-[16px]">testProgram</span>
              <div className="ml-auto pr-[6px]"><X s={11} c="#666" w={1.8} /></div>
            </div>
            <div className="ml-auto flex items-center gap-[10px] pr-[4px]">
              <svg width="8" height="14" viewBox="0 0 8 14"><polygon points="7,1 1,7 7,13" fill="none" stroke="#888" /></svg>
              <svg width="8" height="14" viewBox="0 0 8 14" className="ml-[2px]"><polygon points="1,1 7,7 1,13" fill="none" stroke="#888" /></svg>
              <svg width="12" height="8" viewBox="0 0 12 8" className="ml-[2px]"><polygon points="0,0 12,0 6,8" fill="#777" /></svg>
              <X s={12} c="#777" w={1.6} />
            </div>
          </div>
          <div className="flex-1 min-h-0 flex ml-[3px] border-2 border-[#808080] border-r-[3px] border-b-0 bg-white">
            {/* ladder */}
            <div className="flex-1 min-w-0 flex flex-col font-['Liberation_Sans',Arial,sans-serif]">
              {/* rung 1 */}
              <div className="h-[236px] shrink-0 flex">
                <Num n="1" className="pt-[49px]" />
                <Rail />
                <div className="flex-1 flex items-start pr-[11px]">
                  <Wire className="flex-1 mt-[56px]" />
                  <div className="w-[40px] h-[27px] mt-[46px] -mr-[2px] rounded-[4px] border-2 border-[#8a8a86] bg-[#b4b4ae] text-[#111] text-[19px] leading-[23px] text-center shrink-0">E/R</div>
                  <div className="mt-[29px]">
                    <Box w="w-[341px]" h="h-[179px]">
                      <div className="absolute left-0 top-0 w-0 h-0 border-t-[6px] border-r-[16px] border-t-[#f5ef20] border-r-transparent" />
                      <div className="flex items-center h-[20px] mt-[15px] pl-[7px] pr-[7px]">
                        <span>TMR</span><NoLine className="flex-1 mx-[6px]" /><span>Timer</span><Wrench />
                      </div>
                      <div className="flex justify-between pl-[17px] pr-[8px] h-[31px] mt-[2px] items-start">
                        <span className="mt-[7px]">Timer Struct</span>
                        <div className="flex flex-col items-end">
                          <Lbl className="w-[54px] text-[13.5px]">T0.Done</Lbl>
                          <Pill className="w-[39px] h-[17px] text-[15px] leading-[15px]">OFF</Pill>
                        </div>
                      </div>
                      <Row l="Preset" r="5.000s" />
                      <div className="flex justify-between pl-[17px] pr-[8px] h-[24px] items-center">
                        <span>.Acc</span>
                        <Pill className="w-[81px] h-[19px] text-[17px] rounded-[4px]">0.000s</Pill>
                      </div>
                      <div className="flex pl-[17px] pr-[8px] h-[24px] items-center">
                        <span className="flex-1">.Flags</span>
                        <span className="w-[100px] text-center text-[#858d98]">.Done</span>
                        <span className="w-[80px] text-center text-[#858d98]">.Reset</span>
                      </div>
                      <div className="flex justify-end pl-[17px] pr-[8px] h-[24px] items-center">
                        <span className="w-[100px] text-center text-[#858d98]">.Zero</span>
                        <span className="w-[80px] text-center text-[#858d98]">.Timing</span>
                      </div>
                    </Box>
                  </div>
                </div>
              </div>
              {/* rung 2 */}
              <div className="h-[140px] shrink-0 flex">
                <Num n="2" className="pt-[77px]" />
                <Rail />
                <div className="relative flex-1 flex items-start pr-[11px]">
                  <span className="absolute left-[14px] top-[5px] text-[19.5px] leading-[20px] text-[#8a8a96]">Local S0:iPT2</span>
                  <Wire className="w-[60px] mt-[84px] shrink-0" />
                  <div className="relative w-[32px] shrink-0 mt-[74px] flex justify-between">
                    <span className="absolute left-0 right-0 -top-[29px] text-center text-[19.5px] leading-[20px]">X2</span>
                    <Bar /><Bar />
                  </div>
                  <Wire className="flex-1 mt-[84px]" />
                  <div className="mt-[9px]">
                    <Box w="w-[268px]" h="h-[107px]">
                      <div className="absolute left-0 top-0 w-0 h-0 border-t-[6px] border-r-[16px] border-t-[#22e022] border-r-transparent" />
                      <div className="flex items-center h-[20px] mt-[15px] pl-[7px] pr-[7px]">
                        <span>EXIT</span><NoLine className="flex-1 mx-[6px]" /><span>Exit This Program</span>
                      </div>
                    </Box>
                  </div>
                </div>
              </div>
              {/* rung 3 */}
              <div className="flex-1 min-h-0 flex">
                <Num n="3" className="pt-[106px]" />
                <Rail />
                <div className="relative flex-1 flex items-start pr-[11px]">
                  <Wire className="w-[31px] mt-[113px] shrink-0" />
                  <div className="relative w-[35px] shrink-0 mt-[103px] flex justify-between">
                    <span className="absolute left-0 -top-[70px] text-[19.5px] leading-[20px] text-[#a03838]">$On</span>
                    <span className="absolute left-0 -top-[31px] text-[19.5px] leading-[20px]">ST1</span>
                    <Bar /><Bar />
                  </div>
                  <Wire className="flex-1 mt-[113px]" />
                  <FadeBox />
                  <div className="mt-[13px]">
                    <Box w="w-[278px]" h="h-[275px]">
                      <div className="flex items-center h-[20px] mt-[15px] pl-[7px] pr-[7px]">
                        <span>SCALE</span><NoLine className="flex-1 mx-[6px]" /><span>Scale Value</span><Wrench />
                      </div>
                      <div className="h-[24px] mt-[3px] pl-[8px] text-center text-[#858d98]">Local S0:iCH1</div>
                      <div className="flex justify-between pl-[17px] pr-[8px] h-[30px] mt-[23px]">
                        <span className="mt-[6px]">Input</span>
                        <div className="flex flex-col items-end">
                          <Lbl className="w-[30px] text-[13px]">WX0</Lbl>
                          <Pill className="w-[18px] h-[17px] text-[15px]">0</Pill>
                        </div>
                      </div>
                      <Sp />
                      <Row l="In Min" r="0" />
                      <Row l="In Max" r="1" />
                      <Sp />
                      <Row l="Out Min" r="0" />
                      <Row l="Out Max" r="1" />
                      <Sp />
                      <div className="flex justify-between pl-[17px] pr-[8px] h-[30px]">
                        <span className="mt-[6px]">Output</span>
                        <div className="flex flex-col items-end">
                          <Lbl className="w-[20px] mr-[2px] text-[13px]">D1</Lbl>
                          <Pill className="w-[18px] h-[17px] text-[15px]">0</Pill>
                        </div>
                      </div>
                    </Box>
                  </div>
                </div>
              </div>
            </div>
            {/* scrollbar */}
            <div className="w-[25px] shrink-0 flex flex-col bg-[#f8f8f8] bg-[repeating-linear-gradient(45deg,#f2f2f2_0_1px,#fbfbfb_1px_2px)]">
              <div className="h-[32px] shrink-0 bg-[#f0f0f0] border-b-2 border-r-2 border-[#a0a0a0] flex items-center justify-center"><svg width="12" height="7" viewBox="0 0 12 7"><polygon points="0,7 12,7 6,0" fill="#111" /></svg></div>
              <div className="h-[366px] shrink-0 bg-[#f4f4f4] border-b-2 border-r-2 border-[#a0a0a0]" />
              <div className="flex-1" />
              <div className="h-[26px] shrink-0 mb-[3px] bg-[#f0f0f0] border-b-2 border-r-2 border-[#a0a0a0] flex items-center justify-center"><svg width="12" height="7" viewBox="0 0 12 7"><polygon points="0,0 12,0 6,7" fill="#111" /></svg></div>
            </div>
          </div>
        </div>
      </div>
      {/* status bar */}
      <div className="h-[31px] shrink-0 border-t-2 border-[#a8a8a8] flex items-center text-[16.7px] text-[#222] whitespace-nowrap">
        <span className="pl-[5px] w-[754px] shrink-0">Done</span>
        <div className="w-[130px] shrink-0 h-full border-l border-[#c4c4c4] flex items-center justify-center gap-[3px]">
          <span className="text-[13px] text-[#8a8a8a]">Run</span>
          <span className="text-[18px] font-bold text-[#33338a]">Term</span>
          <span className="text-[13px] text-[#8a8a8a]">Stop</span>
        </div>
        <div className="w-[123px] shrink-0 h-full border-l border-[#c4c4c4] flex items-center justify-around px-[2px]">
          <span>S</span><span>P</span><span>D</span>
        </div>
        <div className="w-[110px] shrink-0 h-full border-l border-[#c4c4c4] flex items-center justify-center">Devs OK</div>
        <div className="w-[98px] shrink-0 h-full bg-[#0000ff] text-white flex items-center justify-center">Info</div>
        <div className="w-[232px] shrink-0 h-full flex items-center justify-center">Online/Default User/MySim</div>
        <div className="w-[81px] shrink-0 h-full border-l border-[#c4c4c4] flex items-center justify-center">Program</div>
        <div className="w-[109px] shrink-0 h-full border-l border-[#c4c4c4] flex items-center justify-center">00141/65536</div>
        <div className="w-[79px] shrink-0 h-full border-x border-[#c4c4c4] flex items-center justify-center">DM-SIM</div>
      </div>
    </div>
  );
}
